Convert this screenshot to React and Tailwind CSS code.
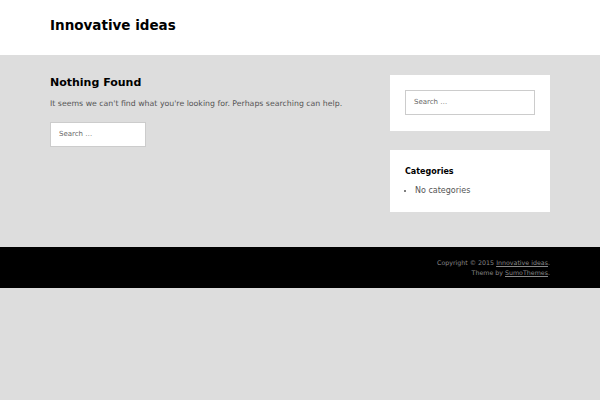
import React from 'react';

const font = { fontFamily: '"DejaVu Sans", sans-serif' };

export default function App() {
  return (
    <div className="min-h-[400px] bg-[#dddddd] text-[#333]" style={font}>
      <header className="bg-white h-[55px] flex items-center px-[50px]">
        <h1 className="text-[13.5px] font-bold text-black leading-none -mt-[3px]">Innovative ideas</h1>
      </header>

      <main className="flex px-[50px] pt-[20px] pb-[35px] gap-[44px]">
        <div className="flex-1 min-w-0 pt-[2px]">
          <h2 className="text-[11px] font-bold text-black leading-none">Nothing Found</h2>
          <p className="text-[7.8px] text-[#555] mt-[12px] leading-none whitespace-nowrap">
            It seems we can't find what you're looking for. Perhaps searching can help.
          </p>
          <div className="mt-[14px] w-[96px] h-[25px] bg-white border border-[#ccc] flex items-center px-[8px]">
            <span className="text-[7px] text-[#666]">Search …</span>
          </div>
        </div>

        <aside className="w-[160px] shrink-0 flex flex-col gap-[19px]">
          <div className="bg-white h-[56px] px-[15px] pt-[15px]">
            <div className="h-[25px] border border-[#ccc] flex items-center px-[8px]">
              <span className="text-[7px] text-[#666]">Search …</span>
            </div>
          </div>
          <div className="bg-white h-[62px] px-[15px] pt-[18px]">
            <h3 className="text-[8px] font-bold text-black leading-none">Categories</h3>
            <ul className="mt-[11px] list-disc pl-[10px] text-[8px] text-[#555] leading-none">
              <li>No categories</li>
            </ul>
          </div>
        </aside>
      </main>

      <footer className="bg-black h-[41px] px-[50px] flex flex-col items-end justify-center text-[6.3px] text-[#888] leading-[10px]">
        <p>Copyright © 2015 <span className="underline">Innovative ideas</span>.</p>
        <p>Theme by <span className="underline">SumoThemes</span>.</p>
      </footer>
    </div>
  );
}
